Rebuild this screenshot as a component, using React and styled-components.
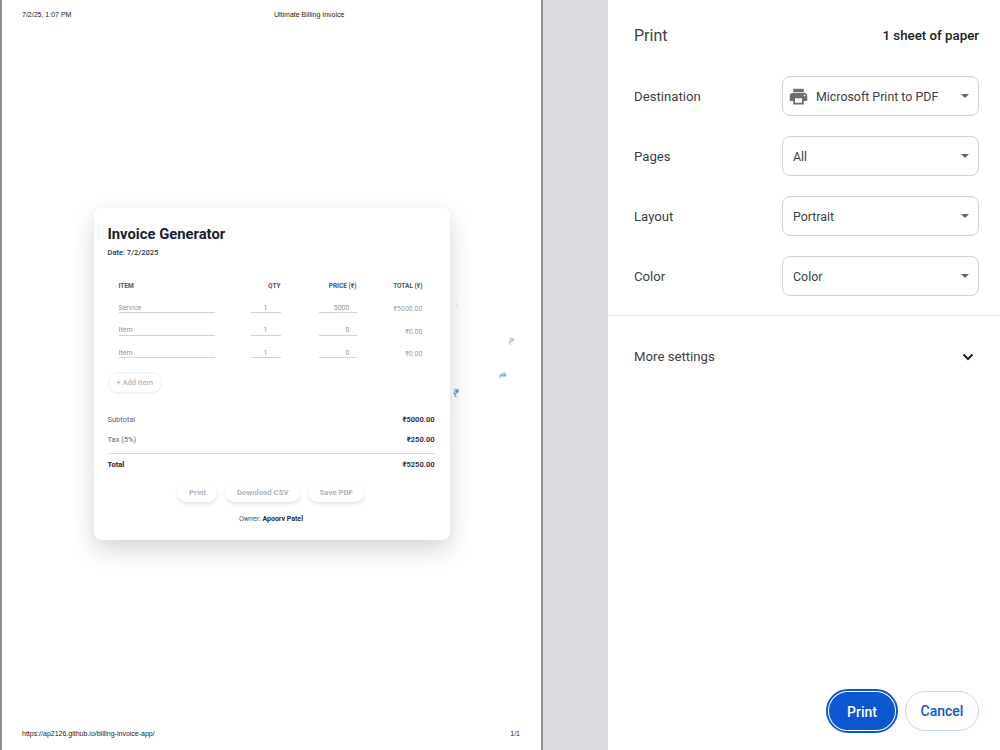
import React from 'react';
import styled, { createGlobalStyle } from 'styled-components';

const UI_FONT = 'Roboto, "Open Sans", "DejaVu Sans", sans-serif';

const GlobalStyle = createGlobalStyle`
  html, body {
    margin: 0;
    padding: 0;
    height: 100%;
    overflow: hidden;
    background: #fff;
    font-family: ${UI_FONT};
  }
  * { box-sizing: border-box; }
`;

// ======================
// PREVIEW
// ======================
const Screen = styled.div`
  display: flex;
  width: 1000px;
  height: 750px;
`;

const Preview = styled.div`
  width: 608px;
  height: 750px;
  flex: none;
  background: #dadce0;
  border-left: 2px solid #8f8f8f;
`;

const Paper = styled.div`
  position: relative;
  width: 541px;
  height: 750px;
  background: #fff;
  display: flex;
  flex-direction: column;
  border-right: 2px solid #8c8c8c;
`;

const PaperLine = styled.div`
  display: grid;
  grid-template-columns: 252px 1fr auto;
  align-items: center;
  height: 12px;
  padding: 0 21px 0 20px;
  margin-top: ${p => p.$top}px;
  margin-bottom: ${p => p.$bottom || 0}px;
  font: 7px "Liberation Sans", Arial, sans-serif;
  color: #222;
`;

const PaperBody = styled.div`
  flex: 1;
  display: flex;
  align-items: center;
  justify-content: center;
`;

const Card = styled.div`
  width: 356px;
  height: 332px;
  background: #fff;
  border-radius: 8px;
  padding: 17px 15px 0 14px;
  box-shadow: 0 10px 24px rgba(0, 0, 0, 0.16), 0 0 8px rgba(0, 0, 0, 0.03);
  color: #1a2233;
`;

const Title = styled.h1`
  margin: 0;
  font-size: 14.8px;
  line-height: 18px;
  font-weight: 700;
  color: #172033;
`;

const DateLine = styled.div`
  margin-top: 5px;
  font-size: 7.5px;
  line-height: 10px;
  font-weight: 500;
  color: #2b3446;
`;

const Table = styled.div`
  margin-top: 23px;
  padding: 0 12px 0 11px;
`;

const Row = styled.div`
  display: grid;
  grid-template-columns: 96px 66px 76px 66px;
  align-items: end;
  height: ${p => p.$h || 22.5}px;
`;

const HeadCell = styled.div`
  font-size: 6.5px;
  font-weight: 700;
  line-height: 10px;
  color: #4a5568;
  text-align: ${p => (p.$left ? 'left' : 'right')};
  align-self: center;
`;

const InputCell = styled.div`
  justify-self: end;
  width: ${p => p.$w}px;
  height: 12px;
  padding: 1.5px ${p => p.$pad || 0}px 0 0;
  border-bottom: 1px solid #ccd3dd;
  font-size: 7px;
  line-height: 10px;
  color: #8b93a0;
  text-align: ${p => p.$align || 'left'};
`;

const TotalCell = styled.div`
  font-size: 7px;
  line-height: 10px;
  margin-bottom: -1px;
  color: #9aa1ac;
  text-align: right;
`;

const AddItem = styled.div`
  display: inline-block;
  margin-top: 14px;
  height: 21px;
  padding: 0 8px;
  border-radius: 11px;
  border: 1px solid #f0f1f3;
  box-shadow: 0 1px 2px rgba(0, 0, 0, 0.06);
  font-size: 7.5px;
  font-weight: 500;
  line-height: 19px;
  color: #b4b8be;
`;

const Summary = styled.div`
  margin-top: 17px;
`;

const SummaryRow = styled.div`
  display: flex;
  justify-content: space-between;
  align-items: center;
  height: 19.5px;
  font-size: 7.5px;
  color: #5b6577;
`;

const Amount = styled.span`
  font-weight: 700;
  color: #2b3446;
`;

const TotalRow = styled(SummaryRow)`
  margin-top: 4px;
  height: 21px;
  border-top: 1px solid #d5dcdf;
  font-weight: 700;
  color: #172033;
`;

const CardActions = styled.div`
  display: flex;
  justify-content: center;
  gap: 9px;
  margin-top: 10px;
`;

const CardButton = styled.div`
  height: 18px;
  padding: 0 11px;
  border-radius: 9px;
  background: #fff;
  box-shadow: 0 2px 4px rgba(0, 0, 0, 0.12);
  font-size: 7.8px;
  font-weight: 700;
  line-height: 17px;
  color: #b0b3b8;
`;

const Owner = styled.div`
  margin-top: 12px;
  text-align: center;
  font-size: 7px;
  line-height: 10px;
  color: #4a5263;
`;

const OwnerName = styled.span`
  font-weight: 700;
  color: #252d3d;
`;

// the little rupee signs floating over the page
const Floater = styled.span`
  position: absolute;
  left: ${p => p.$x}px;
  top: ${p => p.$y}px;
  font-size: ${p => p.$size}px;
  line-height: 1;
  color: #3f8fb8;
  opacity: ${p => p.$o};
  transform: rotate(${p => p.$r}deg);
`;

// ======================
// SIDEBAR
// ======================
const Sidebar = styled.aside`
  width: 392px;
  height: 750px;
  flex: none;
  display: flex;
  flex-direction: column;
  background: #fff;
  color: #3c4043;
`;

const SideHead = styled.div`
  display: flex;
  justify-content: space-between;
  align-items: center;
  padding: 25px 21px 0 26px;
  height: 46px;
`;

const SideTitle = styled.div`
  font-size: 16px;
  line-height: 22px;
  color: #3c4043;
`;

const SheetCount = styled.div`
  font-size: 13.3px;
  font-weight: 500;
  color: #202124;
`;

const Settings = styled.div`
  display: flex;
  flex-direction: column;
  gap: 20px;
  padding: 30px 21px 19px 26px;
  border-bottom: 1px solid #e3e4e6;
`;

const SettingRow = styled.div`
  display: flex;
  justify-content: space-between;
  align-items: center;
`;

const SettingLabel = styled.div`
  font-size: 13.2px;
  color: #3c4043;
`;

const Select = styled.div`
  display: flex;
  align-items: center;
  width: 197px;
  height: 40px;
  padding: 0 9px 0 ${p => (p.$icon ? 5 : 10)}px;
  border: 1px solid #d0d2d6;
  border-radius: 8px;
  font-size: 12.4px;
  color: #3c4043;
`;

const SelectText = styled.span`
  flex: 1;
  margin-left: ${p => (p.$icon ? 7 : 0)}px;
`;

const Caret = styled.span`
  width: 0;
  height: 0;
  border-left: 4px solid transparent;
  border-right: 4px solid transparent;
  border-top: 4px solid #5f6368;
`;

const MoreRow = styled.div`
  display: flex;
  justify-content: space-between;
  align-items: center;
  padding: 33px 25px 0 26px;
  font-size: 13.2px;
  color: #3c4043;
`;

const SideFoot = styled.div`
  margin-top: auto;
  display: flex;
  justify-content: flex-end;
  align-items: center;
  gap: 8px;
  padding: 0 21px 18px 0;
`;

const PrintButton = styled.button`
  width: 70px;
  height: 42px;
  border: 2px solid #fff;
  border-radius: 21px;
  outline: 2px solid #0b57d0;
  outline-offset: -1px;
  background: #0b57d0;
  padding: 1px 0 0;
  font: 500 14px ${UI_FONT};
  color: #fff;
`;

const CancelButton = styled.button`
  width: 74px;
  height: 40px;
  border: 1px solid #c2d7fb;
  border-radius: 20px;
  background: #fff;
  padding: 0;
  font: 500 14px ${UI_FONT};
  color: #0b57d0;
`;

const PrinterIcon = () => (
  <svg width="21" height="21" viewBox="0 0 24 24" fill="#6b6f74">
    <path d="M19 8H5c-1.66 0-3 1.34-3 3v6h4v4h12v-4h4v-6c0-1.66-1.34-3-3-3zm-3 11H8v-5h8v5zm3-7c-.55 0-1-.45-1-1s.45-1 1-1 1 .45 1 1-.45 1-1 1zm-1-9H6v4h12V3z" />
  </svg>
);

const Chevron = () => (
  <svg width="14" height="14" viewBox="0 0 14 14" fill="none" stroke="#202124" strokeWidth="2">
    <path d="M2.5 4.5 7 9l4.5-4.5" />
  </svg>
);

const items = [
  { name: 'Service', price: '5000', total: '₹5000.00' },
  { name: 'Item', price: '0', total: '₹0.00' },
  { name: 'Item', price: '0', total: '₹0.00' },
];

const floaters = [
  { x: 454, y: 303, size: 7, o: 0.18, r: -30 },
  { x: 506, y: 337, size: 10, o: 0.55, r: 20 },
  { x: 497, y: 371, size: 10, o: 0.8, r: 60 },
  { x: 451, y: 388, size: 11, o: 1, r: 12 },
];

const settings = [
  { label: 'Pages', value: 'All' },
  { label: 'Layout', value: 'Portrait' },
  { label: 'Color', value: 'Color' },
];

const App = () => (
  <Screen>
    <GlobalStyle />
    <Preview>
      <Paper>
        <PaperLine $top={8}>
          <span>7/2/25, 1:07 PM</span>
          <span>Ultimate Billing Invoice</span>
          <span />
        </PaperLine>
        <PaperBody>
          <Card>
            <Title>Invoice Generator</Title>
            <DateLine>Date: 7/2/2025</DateLine>
            <Table>
              <Row $h={10}>
                <HeadCell $left>ITEM</HeadCell>
                <HeadCell>QTY</HeadCell>
                <HeadCell>PRICE (₹)</HeadCell>
                <HeadCell>TOTAL (₹)</HeadCell>
              </Row>
              {items.map((item, i) => (
                <Row key={i}>
                  <InputCell $w={96}>{item.name}</InputCell>
                  <InputCell $w={30} $align="center">1</InputCell>
                  <InputCell $w={38} $align="right" $pad={7}>{item.price}</InputCell>
                  <TotalCell>{item.total}</TotalCell>
                </Row>
              ))}
            </Table>
            <AddItem>+ Add Item</AddItem>
            <Summary>
              <SummaryRow>
                <span>Subtotal</span>
                <Amount>₹5000.00</Amount>
              </SummaryRow>
              <SummaryRow>
                <span>Tax (5%)</span>
                <Amount>₹250.00</Amount>
              </SummaryRow>
              <TotalRow>
                <span>Total</span>
                <Amount>₹5250.00</Amount>
              </TotalRow>
            </Summary>
            <CardActions>
              <CardButton>Print</CardButton>
              <CardButton>Download CSV</CardButton>
              <CardButton>Save PDF</CardButton>
            </CardActions>
            <Owner>
              Owner: <OwnerName>Apoorv Patel</OwnerName>
            </Owner>
          </Card>
        </PaperBody>
        <PaperLine $top={0} $bottom={11}>
          <span>https://ap2126.github.io/billing-invoice-app/</span>
          <span />
          <span>1/1</span>
        </PaperLine>
        {floaters.map((f, i) => (
          <Floater key={i} $x={f.x} $y={f.y} $size={f.size} $o={f.o} $r={f.r}>₹</Floater>
        ))}
      </Paper>
    </Preview>
    <Sidebar>
      <SideHead>
        <SideTitle>Print</SideTitle>
        <SheetCount>1 sheet of paper</SheetCount>
      </SideHead>
      <Settings>
        <SettingRow>
          <SettingLabel>Destination</SettingLabel>
          <Select $icon>
            <PrinterIcon />
            <SelectText $icon>Microsoft Print to PDF</SelectText>
            <Caret />
          </Select>
        </SettingRow>
        {settings.map(s => (
          <SettingRow key={s.label}>
            <SettingLabel>{s.label}</SettingLabel>
            <Select>
              <SelectText>{s.value}</SelectText>
              <Caret />
            </Select>
          </SettingRow>
        ))}
      </Settings>
      <MoreRow>
        <span>More settings</span>
        <Chevron />
      </MoreRow>
      <SideFoot>
        <PrintButton>Print</PrintButton>
        <CancelButton>Cancel</CancelButton>
      </SideFoot>
    </Sidebar>
  </Screen>
);

export default App;
